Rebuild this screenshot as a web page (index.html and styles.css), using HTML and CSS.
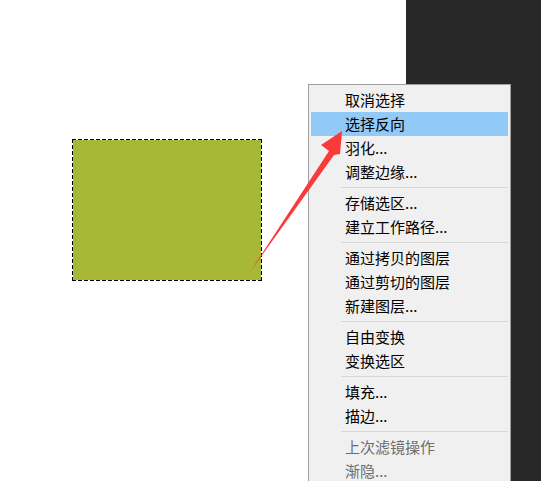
FILE: index.html
```html
<!DOCTYPE html>
<html lang="zh-CN">
<head>
    <meta charset="UTF-8">
    <meta name="viewport" content="width=device-width, initial-scale=1.0">
    <title>选择反向</title>
    <link rel="stylesheet" href="styles.css">
</head>
<body>
    <div class="workspace">
        <div class="canvas">
            <div class="selection"></div>
        </div>
        <div class="side-panel"></div>
    </div>

    <ul class="context-menu">
        <li class="item">取消选择</li>
        <li class="item active">选择反向</li>
        <li class="item">羽化...</li>
        <li class="item">调整边缘...</li>
        <li class="separator"></li>
        <li class="item">存储选区...</li>
        <li class="item">建立工作路径...</li>
        <li class="separator"></li>
        <li class="item">通过拷贝的图层</li>
        <li class="item">通过剪切的图层</li>
        <li class="item">新建图层...</li>
        <li class="separator"></li>
        <li class="item">自由变换</li>
        <li class="item">变换选区</li>
        <li class="separator"></li>
        <li class="item">填充...</li>
        <li class="item">描边...</li>
        <li class="separator"></li>
        <li class="item disabled">上次滤镜操作</li>
        <li class="item disabled">渐隐...</li>
    </ul>

    <!-- red pointer arrow drawn over the canvas -->
    <svg class="arrow" width="541" height="481" viewBox="0 0 541 481">
        <polygon points="250,272 329,151 321,145 342,131 340,154 334,155" fill="#fa3a3a"/>
    </svg>
</body>
</html>
```

FILE: styles.css
```css
* {
    margin: 0;
    padding: 0;
    box-sizing: border-box;
}

html, body {
    width: 541px;
    height: 481px;
    overflow: hidden;
    background: #ffffff;
    font-family: 'Noto Sans CJK SC', 'Noto Sans', sans-serif;
}

.workspace {
    display: flex;
    height: 481px;
}

.canvas {
    width: 406px;
    padding: 139px 0 0 72px;
    background: #ffffff;
}

/* marching ants selection: dashes sit outside the green fill */
.selection {
    width: 190px;
    height: 142px;
    padding: 1px;
    background:
        repeating-linear-gradient(90deg, #000 0 4px, transparent 4px 6px) left top / 100% 1px no-repeat,
        repeating-linear-gradient(90deg, #000 0 4px, transparent 4px 6px) left bottom / 100% 1px no-repeat,
        repeating-linear-gradient(180deg, #000 0 4px, transparent 4px 6px) left top / 1px 100% no-repeat,
        repeating-linear-gradient(180deg, #000 0 4px, transparent 4px 6px) right top / 1px 100% no-repeat,
        linear-gradient(#a7b836, #a7b836) content-box,
        #ffffff;
}

.side-panel {
    flex: 1;
    background: #282828;
}

.context-menu {
    position: absolute;
    top: 84px;
    left: 308px;
    width: 203px;
    padding: 2px 2px 0;
    list-style: none;
    background: #f0f0f0;
    border: 1px solid #a0a0a0;
    border-bottom: none;
    font-size: 15px;
    color: #000000;
}

.context-menu .item {
    height: 24px;
    line-height: 23px;
    padding-left: 34px;
    white-space: nowrap;
}

.context-menu .item:first-child {
    margin-top: 1px;
}

.context-menu .active {
    background: #91c9f7;
}

.context-menu .disabled {
    color: #6d6d6d;
}

.context-menu .separator {
    height: 7px;
    margin-left: 30px;
    background: linear-gradient(#d7d7d7, #d7d7d7) no-repeat 0 3px / 100% 1px;
}

.arrow {
    position: absolute;
    top: 0;
    left: 0;
    pointer-events: none;
}
```
